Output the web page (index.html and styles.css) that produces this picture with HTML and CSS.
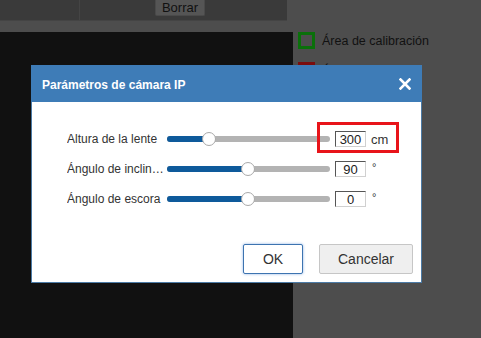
FILE: index.html
```html
<!DOCTYPE html>
<html lang="es">

<head>
    <meta charset="UTF-8">
    <meta name="viewport" content="width=device-width, initial-scale=1.0">
    <title>Parámetros de cámara IP</title>
    <link rel="stylesheet" href="styles.css">
</head>

<body>
    <div class="toolbar">
        <div class="tool-cell first"></div>
        <div class="tool-cell second">
            <button class="tool-btn" type="button">Borrar</button>
        </div>
    </div>
    <div class="strip"></div>

    <div class="main">
        <div class="video"></div>
        <ul class="legend">
            <li><span class="swatch green"></span>Área de calibración</li>
            <li><span class="swatch red"></span>Área de alarma</li>
        </ul>
    </div>

    <!-- ventana modal -->
    <div class="dialog">
        <div class="dialog-head">
            <h2>Parámetros de cámara IP</h2>
            <button class="close" type="button" aria-label="Cerrar">
                <svg width="12" height="12" viewBox="0 0 12 12">
                    <path d="M1.5 1.5 L10.5 10.5 M10.5 1.5 L1.5 10.5" stroke="#fff" stroke-width="2.6" stroke-linecap="square" fill="none"/>
                </svg>
            </button>
        </div>
        <div class="dialog-body">
            <div class="row">
                <span class="label">Altura de la lente</span>
                <div class="slider">
                    <div class="fill" style="width: 42px"></div>
                    <div class="thumb" style="left: 42px"></div>
                </div>
                <span class="value">
                    <input class="num" type="text" value="300">
                    <span class="unit">cm</span>
                    <span class="highlight"></span>
                </span>
            </div>
            <div class="row">
                <span class="label">Ángulo de inclinación</span>
                <div class="slider">
                    <div class="fill" style="width: 81px"></div>
                    <div class="thumb" style="left: 81px"></div>
                </div>
                <span class="value">
                    <input class="num" type="text" value="90">
                    <span class="unit deg">°</span>
                </span>
            </div>
            <div class="row">
                <span class="label">Ángulo de escora</span>
                <div class="slider">
                    <div class="fill" style="width: 81px"></div>
                    <div class="thumb" style="left: 81px"></div>
                </div>
                <span class="value">
                    <input class="num" type="text" value="0">
                    <span class="unit deg">°</span>
                </span>
            </div>
        </div>
        <div class="dialog-foot">
            <button class="btn ok" type="button">OK</button>
            <button class="btn" type="button">Cancelar</button>
        </div>
    </div>
</body>
</html>
```

FILE: styles.css
```css
* {
    margin: 0;
    padding: 0;
    box-sizing: border-box;
}
body {
    width: 481px;
    height: 338px;
    overflow: hidden;
    background: #4d4d4d;
    font-family: "Liberation Sans", Arial, sans-serif;
    font-size: 12px;
    position: relative;
}
.toolbar {
    display: flex;
    width: 287px;
    height: 21px;
    background: #3a3a3a;
    border-bottom: 1px solid #444;
}
.tool-cell.first {
    width: 80px;
    border-right: 1px solid #444;
}
.tool-cell.second {
    flex: 1;
    padding-left: 75px;
}
.tool-btn {
    width: 50px;
    height: 16px;
    background: #555;
    border: 1px solid #4a4a4a;
    border-top: none;
    border-radius: 0 0 2px 2px;
    color: #111;
    font-family: inherit;
    font-size: 13px;
    line-height: 12px;
}
.strip {
    height: 11px;
}
.main {
    display: flex;
    height: 306px;
}
.video {
    width: 293px;
    background: #111;
}
.legend {
    list-style: none;
    padding-left: 5px;
}
.legend li {
    display: flex;
    align-items: center;
    gap: 7px;
    height: 17px;
    margin-bottom: 13px;
    color: #111;
    font-size: 12.5px;
}
.swatch {
    width: 17px;
    height: 17px;
    border: 3px solid;
}
.swatch.green {
    border-color: #0a700a;
}
.swatch.red {
    border-color: #7a0d0d;
}

.dialog {
    position: absolute;
    left: 31px;
    top: 65px;
    width: 391px;
    height: 218px;
    background: #fff;
    border: 1px solid #4c7ba6;
    display: flex;
    flex-direction: column;
}
.dialog-head {
    height: 37px;
    margin: -1px -1px 0 -1px;
    background: #3e7cb7;
    display: flex;
    align-items: center;
    justify-content: space-between;
    padding: 0 11px 0 11px;
}
.dialog-head h2 {
    color: #fff;
    font-size: 12px;
    font-weight: bold;
    padding-top: 2px;
}
.close {
    background: none;
    border: none;
    width: 12px;
    height: 12px;
    display: flex;
}
.dialog-body {
    flex: 1;
    padding: 22px 0 0 35px;
}
.row {
    display: flex;
    align-items: center;
    height: 30px;
    color: #333;
}
.label {
    width: 99px;
    margin-right: 1px;
    white-space: nowrap;
    overflow: hidden;
    text-overflow: ellipsis;
    font-size: 12px;
}
.slider {
    position: relative;
    width: 163px;
    height: 6px;
    border-radius: 3px;
    background: #b3b3b3;
}
.fill {
    height: 6px;
    border-radius: 3px 0 0 3px;
    background: #0e5a9b;
}
.thumb {
    position: absolute;
    top: -4px;
    width: 14px;
    height: 14px;
    margin-left: -7px;
    border-radius: 50%;
    background: #fff;
    border: 1px solid #a9a9a9;
}
.value {
    position: relative;
    display: flex;
    align-items: center;
    margin-left: 5px;
}
.num {
    width: 31px;
    height: 16px;
    border: 1px solid;
    border-color: #555 #d0d0d0 #d0d0d0 #555;
    font-family: inherit;
    font-size: 13px;
    color: #222;
    text-align: center;
    outline: none;
}
.unit {
    margin-left: 5px;
    font-size: 13px;
}
.unit.deg {
    margin-left: 6px;
    font-size: 11px;
    align-self: flex-start;
}
.highlight {
    position: absolute;
    left: -18px;
    top: -9px;
    width: 82px;
    height: 31px;
    border: 3px solid #e8141a;
}
.dialog-foot {
    display: flex;
    justify-content: flex-end;
    gap: 16px;
    padding: 0 8px 8px 0;
}
.btn {
    width: 94px;
    height: 30px;
    background: #efefef;
    border: 1px solid #c6c6c6;
    border-radius: 2px;
    color: #333;
    font-family: inherit;
    font-size: 14px;
}
.btn.ok {
    width: 60px;
    background: #fff;
    border-color: #3d74b0;
    box-shadow: 0 0 3px #8fb4e6;
}
```
